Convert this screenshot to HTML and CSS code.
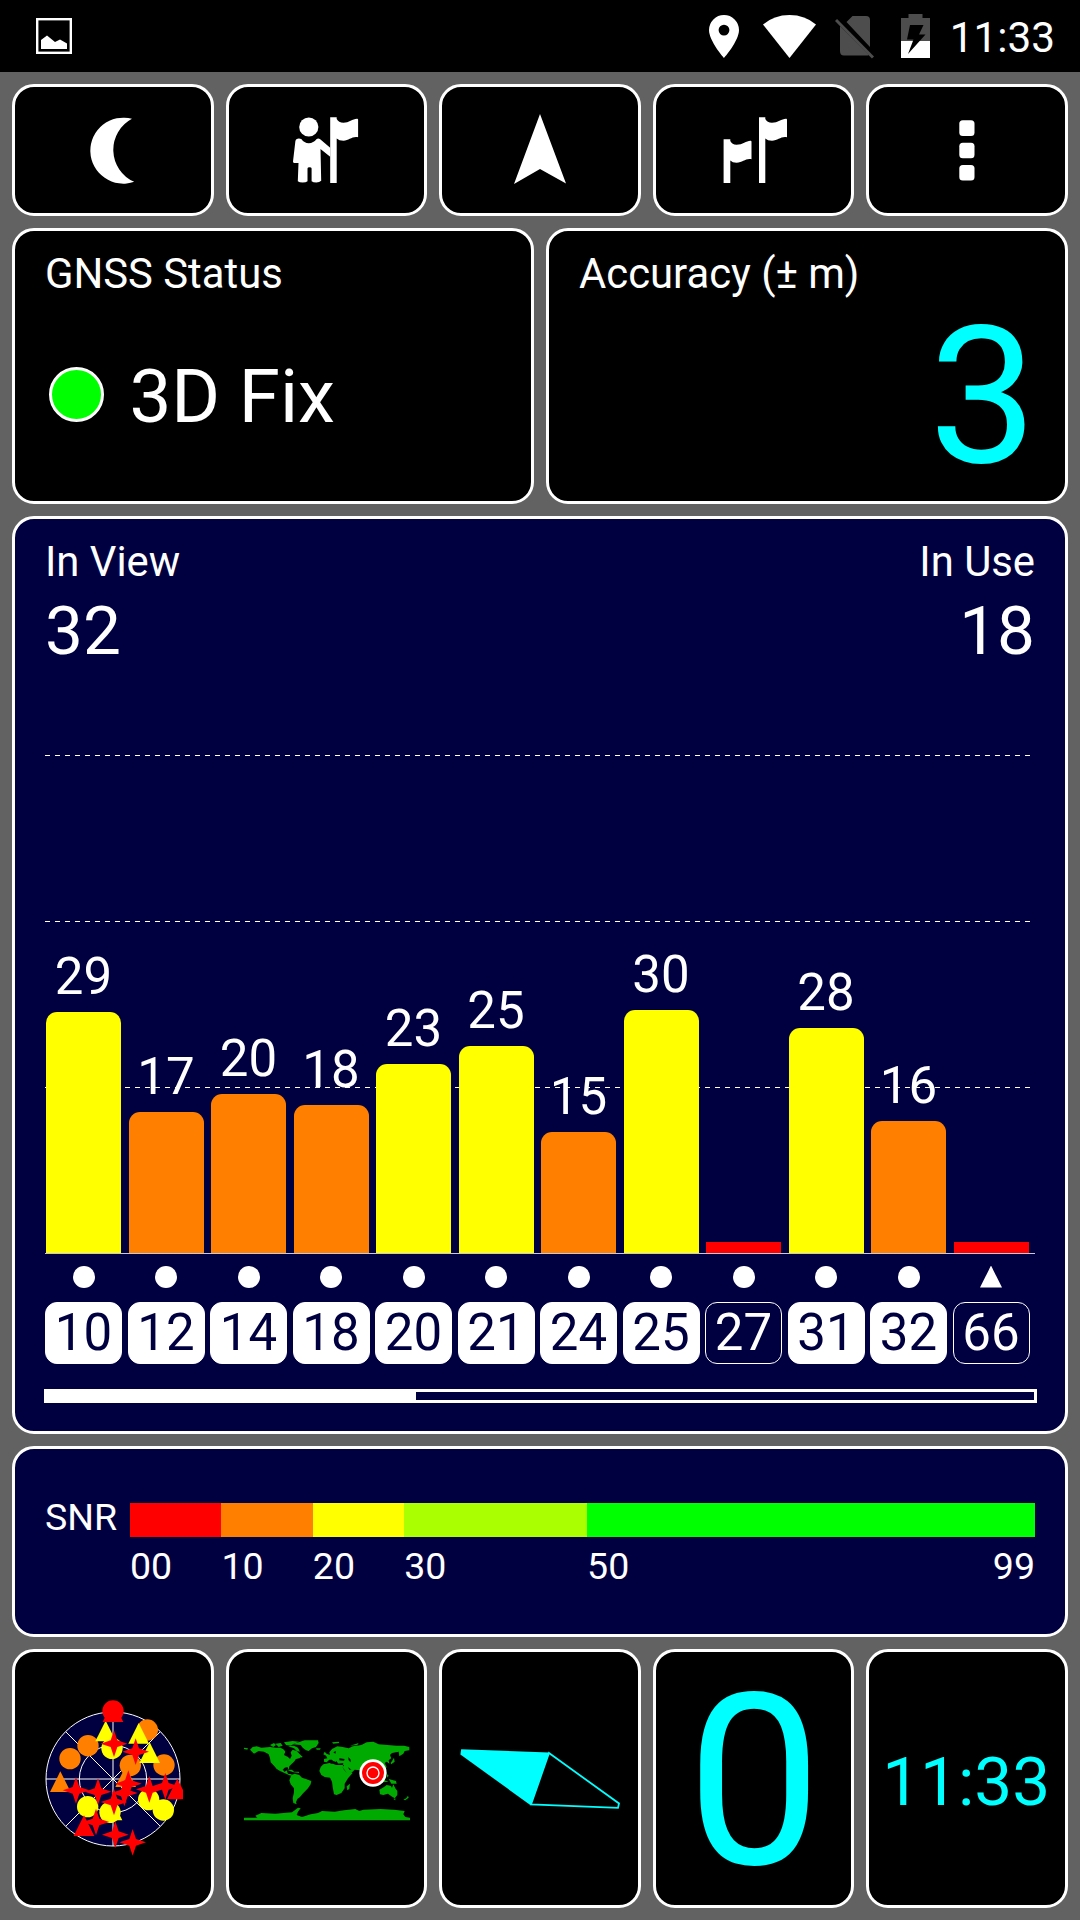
FILE: index.html
```html
<!DOCTYPE html>
<html lang="en">
<head>
    <meta charset="UTF-8">
    <meta name="viewport" content="width=device-width, initial-scale=1.0">
    <title>GNSS Status</title>
    <link rel="stylesheet" href="styles.css">
</head>
<body>
    <header class="status-bar">
        <svg class="picture-icon" width="36" height="36" viewBox="0 0 36 36">
            <rect x="1.2" y="1.2" width="33.6" height="33.6" fill="none" stroke="#fff" stroke-width="2.4"/>
            <path d="M5 31V22L11 17.5 19 24 24 21.5 31 25.500V31Z" fill="#fff"/>
        </svg>
        <svg class="pin-icon" width="30" height="43" viewBox="0 0 30 43">
            <path fill="#fff" fill-rule="evenodd" d="M15 0A15 15 0 0 0 0 15C0 26 15 43 15 43S30 26 30 15A15 15 0 0 0 15 0ZM15 9.700A5.400 5.400 0 1 1 15 20.500A5.400 5.400 0 1 1 15 9.700Z"/>
        </svg>
        <svg class="wifi-icon" width="53" height="43" viewBox="0 0 53 43">
            <path fill="#fff" d="M26.500 43L0 9.500Q11 0 26.500 0T53 9.500Z"/>
        </svg>
        <svg class="sim-icon" width="39" height="43" viewBox="0 0 39 43">
            <path fill="#4d4d4d" d="M11.500 6L17.500 0H31Q35 0 35 4V31ZM5 10L34 39Q33 39.500 31 39.500H9Q5 39.500 5 35Z"/>
            <path stroke="#4d4d4d" stroke-width="3" d="M1 4L38 41.500"/>
        </svg>
        <svg class="battery-icon" width="29" height="44" viewBox="0 0 29 44">
            <path fill="#4d4d4d" d="M0 4H7.500V0H21.500V4H29V27H0Z"/>
            <path fill="#fff" d="M0 27H29V44H0Z"/>
            <path d="M9 11H22.500L18 20.500H24.500L7 40L12.500 25.500H6Z"/>
        </svg>
        <span class="clock">11:33</span>
    </header>

    <main class="dashboard">
        <nav class="row five">
            <button class="tile">
                <svg width="84" height="72" viewBox="-1 -0.5 84 72">
                    <path fill="#fff" d="M60 4.300A33 33 0 1 0 62.200 67.300A35 35 0 0 1 60 4.300Z"/>
                </svg>
            </button>
            <button class="tile">
                <svg width="84" height="72" viewBox="0 0 84 72">
                    <circle cx="24.800" cy="13" r="9.600" fill="#fff"/>
                    <path fill="#fff" d="M13.500 24.700Q16 24.300 17.600 25.300Q20 29 24.800 29.300Q29.500 29 32.400 25.300Q34 24 35.900 25L46.200 33.700V42.700L36.500 35L37.200 66.700Q35.500 68.500 32.400 68.500Q29 68.500 27.600 67.300V54.500Q27.600 53.300 25.500 53.300Q23.500 53.300 23.500 54.500V67.300Q22 68.500 18.600 68.500Q15.500 68.500 13.800 67.300L14.500 49H11.500Q9 49.500 9 47.500L11.400 27Q11.600 25 13.500 24.700Z"/>
                    <path fill="#fff" d="M46.200 3.300H52.700V5Q54.500 8.700 59.500 8.700C65 8.700 69 4.300 73.500 4.700L74.100 5.500V23.300C68 22 65 26.700 59.500 26.700Q55 26.700 52.700 24.500V69H46.200Z"/>
                </svg>
            </button>
            <button class="tile">
                <svg width="84" height="72" viewBox="0 0 84 72">
                    <path fill="#fff" d="M42 0L68 69.500L42 55L16 70Z"/>
                </svg>
            </button>
            <button class="tile">
                <svg width="84" height="72" viewBox="0 0 84 72">
                    <path fill="#fff" d="M47 3.300H53.300V5Q55 8.700 60 8.700C66 8.700 70 4.300 74.500 4.700L75 5.500V23.300C69 22 66 26.700 60 26.700Q55.500 26.700 53.300 24.500V69H47Z"/>
                    <path fill="#fff" d="M11.600 25.300H18.300V27Q20 30.700 24.500 30.700C31 30.700 34.500 26.300 39 26.700L39.500 27.500V45.300C33.500 44 31 48.700 24.500 48.700Q20.500 48.700 18.300 46.500V69H11.600Z"/>
                </svg>
            </button>
            <button class="tile">
                <svg width="84" height="72" viewBox="0 0 84 72">
                    <g fill="#fff">
                        <rect x="34.300" y="6.300" width="15.200" height="15.700" rx="3.500"/>
                        <rect x="34.300" y="28.700" width="15.200" height="15.500" rx="3.500"/>
                        <rect x="34.300" y="51" width="15.200" height="15.500" rx="3.500"/>
                    </g>
                </svg>
            </button>
        </nav>

        <div class="row two">
            <section class="card">
                <div class="label">GNSS Status</div>
                <div class="fix">
                    <span class="led"></span>
                    <span class="fix-text">3D Fix</span>
                </div>
            </section>
            <section class="card">
                <div class="label">Accuracy (± m)</div>
                <div class="accuracy">3</div>
            </section>
        </div>

        <section class="card navy">
            <div class="counts">
                <div>
                    <div class="label">In View</div>
                    <div class="count">32</div>
                </div>
                <div class="right">
                    <div class="label">In Use</div>
                    <div class="count">18</div>
                </div>
            </div>

            <div class="plot">
                <div class="sat"><span>29</span><div class="bar yellow" style="height: 241px"></div></div>
                <div class="sat"><span>17</span><div class="bar orange" style="height: 141px"></div></div>
                <div class="sat"><span>20</span><div class="bar orange" style="height: 159px"></div></div>
                <div class="sat"><span>18</span><div class="bar orange" style="height: 148px"></div></div>
                <div class="sat"><span>23</span><div class="bar yellow" style="height: 189px"></div></div>
                <div class="sat"><span>25</span><div class="bar yellow" style="height: 207px"></div></div>
                <div class="sat"><span>15</span><div class="bar orange" style="height: 121px"></div></div>
                <div class="sat"><span>30</span><div class="bar yellow" style="height: 243px"></div></div>
                <div class="sat"><div class="bar red" style="height: 11px"></div></div>
                <div class="sat"><span>28</span><div class="bar yellow" style="height: 225px"></div></div>
                <div class="sat"><span>16</span><div class="bar orange" style="height: 132px"></div></div>
                <div class="sat"><div class="bar red" style="height: 11px"></div></div>
            </div>

            <div class="marks">
                <i class="dot"></i><i class="dot"></i><i class="dot"></i><i class="dot"></i>
                <i class="dot"></i><i class="dot"></i><i class="dot"></i><i class="dot"></i>
                <i class="dot"></i><i class="dot"></i><i class="dot"></i><i class="triangle"></i>
            </div>

            <div class="ids">
                <span>10</span>
                <span>12</span>
                <span>14</span>
                <span>18</span>
                <span>20</span>
                <span>21</span>
                <span>24</span>
                <span>25</span>
                <span class="unused">27</span>
                <span>31</span>
                <span>32</span>
                <span class="unused">66</span>
            </div>

            <div class="scroll"><div class="thumb"></div></div>
        </section>

        <section class="card navy snr">
            <div class="snr-name">SNR</div>
            <div class="scale">
                <div class="colors">
                    <i class="red"></i>
                    <i class="orange"></i>
                    <i class="yellow"></i>
                    <i class="lime"></i>
                    <i class="green"></i>
                </div>
                <div class="ticks">
                    <span>00</span>
                    <span>10</span>
                    <span>20</span>
                    <span>30</span>
                    <span class="last"><b>50</b><b>99</b></span>
                </div>
            </div>
        </section>

        <div class="row five">
            <div class="tile">
                <!-- sky view -->
                <svg width="140" height="160" viewBox="38 26 420 480">
                    <defs>
                        <path id="star" d="M0-40L10-10L40 0L10 10L0 40L-10 10L-40 0L-10-10Z"/>
                        <path id="tri" d="M0-31L31 31H-31Z"/>
                        <circle id="sat" r="32"/>
                    </defs>
                    <circle cx="248" cy="266" r="201" fill="#000040"/>
                    <g fill="none" stroke="#fff" stroke-width="3">
                        <circle cx="248" cy="266" r="201"/>
                        <circle cx="248" cy="266" r="101"/>
                        <path d="M47 266H449M248 65V467M106 124L390 408M390 124L106 408"/>
                    </g>
                    <g fill="#ff8000">
                        <use href="#sat" x="351" y="119"/>
                        <use href="#sat" x="173" y="166"/>
                        <use href="#sat" x="119" y="205"/>
                        <use href="#sat" x="300" y="225"/>
                        <use href="#sat" x="401" y="224"/>
                        <use href="#tri" x="90" y="274"/>
                        <use href="#tri" x="286" y="259"/>
                    </g>
                    <g fill="#ff0">
                        <use href="#sat" x="245" y="174"/>
                        <use href="#sat" x="172" y="349"/>
                        <use href="#sat" x="355" y="328"/>
                        <use href="#sat" x="399" y="359"/>
                        <use href="#sat" x="239" y="366"/>
                        <use href="#tri" x="226" y="122"/>
                        <use href="#tri" x="325" y="129"/>
                        <use href="#tri" x="358" y="187"/>
                        <use href="#tri" x="245" y="359"/>
                    </g>
                    <g fill="#f00">
                        <use href="#sat" x="248" y="62"/>
                        <use href="#tri" x="248" y="64"/>
                        <use href="#tri" x="441" y="296"/>
                        <use href="#tri" x="161" y="406"/>
                        <use href="#star" x="251" y="160"/>
                        <use href="#star" x="316" y="184"/>
                        <use href="#star" x="137" y="300"/>
                        <use href="#star" x="203" y="304"/>
                        <use href="#star" x="294" y="280"/>
                        <use href="#star" x="282" y="308"/>
                        <use href="#star" x="357" y="297"/>
                        <use href="#star" x="405" y="288"/>
                        <use href="#star" x="251" y="335"/>
                        <use href="#star" x="197" y="395"/>
                        <use href="#star" x="255" y="433"/>
                        <use href="#star" x="307" y="456"/>
                    </g>
                </svg>
            </div>
            <div class="tile">
                <!-- world map -->
                <svg width="170" height="90" viewBox="31 41 510 270">
                    <g fill="#0a0">
                        <path d="M58 88L66 80 78 78 92 82 118 80 136 82 150 82 160 88 164 94 160 104 172 110 178 116 183 106 180 96 186 88 198 92 206 100 214 108 206 114 196 116 190 124 182 132 176 138 174 148 170 140 162 142 156 148 162 154 168 150 172 160 184 162 180 166 166 160 148 152 138 146 130 136 120 126 118 114 114 102 100 94 84 92 70 100Z"/>
                        <path d="M40 82L52 84 50 88 40 86ZM118 74L130 68 136 74 128 80ZM134 70L150 68 156 76 144 80ZM160 66L186 62 206 64 190 70 180 76 166 74ZM172 78L190 76 202 82 208 94 198 92 190 84ZM208 106L216 108 212 112Z"/>
                        <path d="M184 72L208 64 222 60 262 60 264 68 256 80 244 84 234 92 226 90 216 82 210 74ZM256 84L270 84 268 88 258 88Z"/>
                        <path d="M168 148L184 148 190 154 204 154 206 158 188 156Z"/>
                        <path d="M182 164L192 160 206 164 214 172 226 176 242 182 240 192 232 204 224 212 216 220 208 230 200 236 196 246 198 252 188 248 186 234 190 216 190 204 180 192 176 180Z"/>
                        <path d="M278 132L296 128 306 130 318 134 336 134 346 146 352 156 366 158 352 174 342 190 342 204 332 218 318 224 310 222 306 200 304 184 298 172 282 170 272 164 266 152 270 140ZM348 198L358 190 356 206 350 210Z"/>
                        <path d="M280 124L280 116 290 114 286 106 278 102 282 94 288 100 298 104 296 96 304 86 320 78 336 80 354 84 366 78 378 76 392 74 408 66 428 64 444 72 470 74 498 76 520 76 536 80 536 90 522 92 518 100 506 108 504 94 484 98 478 104 482 114 474 120 476 130 468 124 462 128 468 140 462 150 448 156 446 168 440 158 432 160 430 176 422 158 412 158 402 170 394 158 388 150 372 148 362 158 346 162 338 144 340 134 322 130 318 122 310 130 304 118 296 118 288 126Z"/>
                        <path d="M304 66L324 64 326 68 308 70ZM358 76L384 68 380 74ZM480 128L490 112 492 124 482 132ZM468 160L474 166 470 172ZM450 168L462 180 474 184 456 186ZM474 176L496 182 498 190 482 190Z"/>
                        <path d="M446 208L460 200 468 194 480 196 484 202 488 192 494 204 500 212 500 224 492 234 482 228 472 220 458 224 448 222ZM488 236L494 234 494 240ZM518 238L526 234 532 226 534 232 524 240Z"/>
                        <path d="M40 300V292H80L74 286 92 278 134 280 184 276 202 262 210 264 202 274 198 284 214 290 240 282 262 278 274 272 312 274 340 270 374 266 386 272 398 268 450 266 490 268 522 272 518 282 524 290 538 292V300Z"/>
                    </g>
                    <path d="M302 120L314 124 322 130 338 128 336 134 318 134 306 128 300 130ZM326 114L342 116 340 121 326 120ZM353 110L360 118 360 126 354 120ZM334 138L344 152 348 158 340 148ZM352 140L362 148 356 148ZM308 96L316 92 314 100Z"/>
                    <circle cx="427" cy="158" r="41" fill="#fff"/>
                    <circle cx="427" cy="158" r="26.500" fill="none" stroke="#f00" stroke-width="13"/>
                    <circle cx="427" cy="158" r="16" fill="#f00"/>
                </svg>
            </div>
            <div class="tile">
                <svg width="180" height="80" viewBox="0 0 180 80">
                    <path fill="#0ff" d="M11.200 10.200L99 13.500L80.600 66.200L10.400 15.500Z"/>
                    <path fill="none" stroke="#0ff" stroke-width="1.800" d="M99 14L169 64.500L168 68.800L81 65.500Z"/>
                </svg>
            </div>
            <div class="tile speed">0</div>
            <div class="tile time">11:33</div>
        </div>
    </main>
</body>
</html>
```
FILE: styles.css
```css
* {
    box-sizing: border-box;
}

body {
    margin: 0;
    width: 1080px;
    height: 1920px;
    background-color: #626262;
    color: #ffffff;
    font-family: Roboto, sans-serif;
    overflow: hidden;
}

svg {
    display: block;
}

/* status bar */
.status-bar {
    display: flex;
    align-items: center;
    height: 72px;
    padding: 0 25px 0 36px;
    background-color: #000000;
}

.picture-icon {
    margin-right: auto;
}

.wifi-icon {
    margin: 0 19px 0 24px;
}

.sim-icon {
    margin-top: 2px;
}

.battery-icon {
    margin: 0 20px 0 27px;
}

.clock {
    font-size: 42.3px;
    line-height: 68px;
    padding-top: 4px;
}

/* panels */
.dashboard {
    display: grid;
    grid-template-rows: 132px 275.6px 918.6px 191.2px 258.6px;
    gap: 12px;
    padding: 12px;
}

.row {
    display: grid;
    gap: 12px;
}

.five {
    grid-template-columns: repeat(5, 1fr);
}

.two {
    grid-template-columns: repeat(2, 1fr);
}

.tile,
.card {
    background-color: #000000;
    border: 3px solid #ffffff;
    border-radius: 22px;
    min-width: 0;
}

.tile {
    display: flex;
    justify-content: center;
    align-items: center;
    padding: 0;
}

.card {
    padding: 19px 30px 0;
}

.navy {
    background-color: #000040;
}

.label {
    font-size: 41.8px;
    line-height: 48px;
}

.fix {
    display: flex;
    align-items: center;
    gap: 26px;
    margin: 54px 0 0 3.5px;
}

.led {
    width: 55px;
    height: 55px;
    margin-bottom: 5px;
    border: 3px solid #ffffff;
    border-radius: 50%;
    background-color: #00ff00;
}

.fix-text {
    font-size: 74.5px;
    line-height: 90px;
}

.accuracy {
    margin: 3px -2px 0 0;
    font-size: 192px;
    line-height: 192px;
    text-align: right;
    color: #00ffff;
}

/* satellites */
.counts {
    display: flex;
    justify-content: space-between;
}

.right {
    text-align: right;
}

.count {
    margin-top: 9px;
    font-size: 67.5px;
    line-height: 72px;
}

.plot {
    --dash: repeating-linear-gradient(90deg, #ffffff 0 5px, transparent 5px 10px);
    display: flex;
    gap: 5.5px;
    align-items: flex-end;
    height: 587px;
    border-bottom: 1px solid #c8c8d8;
    background-image: var(--dash), var(--dash), var(--dash);
    background-size: 986px 1px;
    background-repeat: no-repeat;
    background-position: 0 88px, 0 254px, 0 420px;
}

.sat {
    width: 77px;
    padding: 0 1px;
    font-size: 51px;
    line-height: 50px;
    text-align: center;
}

.sat span {
    display: block;
    padding-bottom: 10px;
}

.bar {
    border-radius: 11px 11px 0 0;
}

.bar.red {
    border-radius: 0;
}

.red {
    background-color: #ff0000;
}

.orange {
    background-color: #ff8000;
}

.yellow {
    background-color: #ffff00;
}

.lime {
    background-color: #aaff00;
}

.green {
    background-color: #00ff00;
}

.marks,
.ids {
    display: grid;
    grid-template-columns: repeat(12, 77px);
    gap: 5.5px;
    justify-items: center;
}

.marks {
    margin-top: 12px;
}

.dot {
    width: 22px;
    height: 22px;
    border-radius: 50%;
    background-color: #ffffff;
}

.triangle {
    width: 22px;
    height: 22px;
    background-color: #ffffff;
    clip-path: polygon(50% 0, 100% 100%, 0 100%);
}

.ids {
    margin-top: 14px;
}

.ids span {
    width: 77px;
    height: 62px;
    border: 1px solid #ffffff;
    border-radius: 12px;
    background-color: #ffffff;
    color: #000040;
    font-size: 51px;
    line-height: 60px;
    text-align: center;
}

.ids .unused {
    background-color: transparent;
    color: #ffffff;
}

.scroll {
    height: 14px;
    margin: 25px -2px 0 -1px;
    border: 3px solid #ffffff;
}

.thumb {
    width: 369px;
    height: 100%;
    background-color: #ffffff;
}

/* SNR scale */
.snr {
    display: flex;
    padding-top: 54px;
    font-size: 37.5px;
    line-height: 44px;
}

.snr-name {
    width: 85px;
    margin-top: -8px;
}

.scale {
    flex: 1;
}

.colors,
.ticks {
    display: grid;
    grid-template-columns: 10fr 10fr 10fr 20fr 49fr;
}

.colors {
    height: 34px;
}

.ticks {
    margin-top: 7px;
}

.last {
    display: flex;
    justify-content: space-between;
}

.last b {
    font-weight: normal;
}

/* bottom tiles */
.speed {
    padding: 6px 0 0 1px;
    font-size: 240px;
    line-height: 240px;
    color: #00ffff;
}

.time {
    padding: 5px 2px 0 0;
    font-size: 67.5px;
    color: #00ffff;
}
```
